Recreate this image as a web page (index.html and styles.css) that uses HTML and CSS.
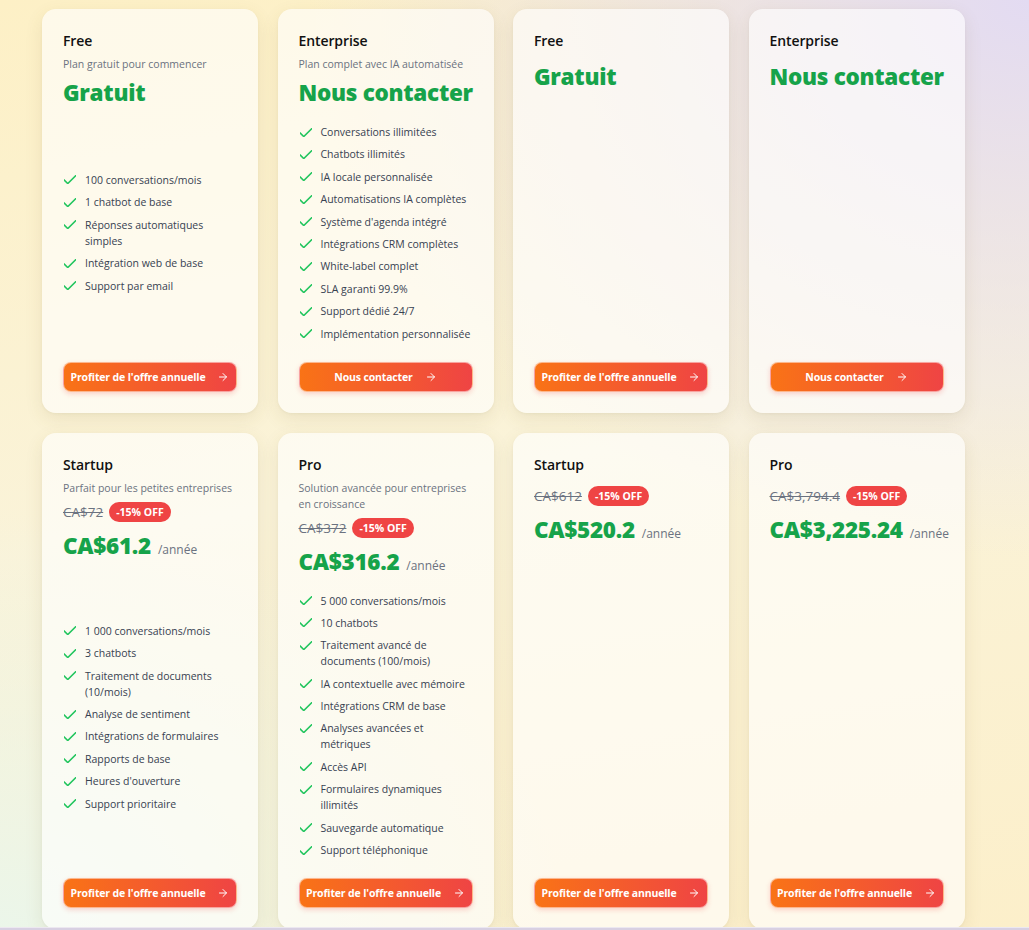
FILE: index.html
```html
<!DOCTYPE html>
<html lang="fr">
<head>
<meta charset="utf-8">
<title>Tarifs</title>
<link rel="stylesheet" href="styles.css">
</head>
<body>
<svg width="0" height="0" class="defs">
  <symbol id="check" viewBox="4 5.5 16 12"><path d="M20 6 9 17l-5-5" fill="none" stroke="currentColor" stroke-width="2" stroke-linecap="round" stroke-linejoin="round"/></symbol>
  <symbol id="arrow" viewBox="0 0 24 24"><path d="M5 12h14M12 5l7 7-7 7" fill="none" stroke="currentColor" stroke-width="2" stroke-linecap="round" stroke-linejoin="round"/></symbol>
</svg>
<main class="grid">
  <!-- Row 1 -->
  <section class="card">
    <h3 class="title">Free</h3>
    <p class="subtitle">Plan gratuit pour commencer</p>
    <div class="pricing"><div class="price-row"><span class="price">Gratuit</span></div></div>
    <div class="features">
      <ul>
        <li><svg class="ck"><use href="#check"/></svg><span>100 conversations/mois</span></li>
        <li><svg class="ck"><use href="#check"/></svg><span>1 chatbot de base</span></li>
        <li><svg class="ck"><use href="#check"/></svg><span>Réponses automatiques simples</span></li>
        <li><svg class="ck"><use href="#check"/></svg><span>Intégration web de base</span></li>
        <li><svg class="ck"><use href="#check"/></svg><span>Support par email</span></li>
      </ul>
    </div>
    <button class="btn">Profiter de l'offre annuelle <svg class="ar"><use href="#arrow"/></svg></button>
  </section>
  <section class="card">
    <h3 class="title">Enterprise</h3>
    <p class="subtitle">Plan complet avec IA automatisée</p>
    <div class="pricing"><div class="price-row"><span class="price">Nous contacter</span></div></div>
    <div class="features">
      <ul>
        <li><svg class="ck"><use href="#check"/></svg><span>Conversations illimitées</span></li>
        <li><svg class="ck"><use href="#check"/></svg><span>Chatbots illimités</span></li>
        <li><svg class="ck"><use href="#check"/></svg><span>IA locale personnalisée</span></li>
        <li><svg class="ck"><use href="#check"/></svg><span>Automatisations IA complètes</span></li>
        <li><svg class="ck"><use href="#check"/></svg><span>Système d'agenda intégré</span></li>
        <li><svg class="ck"><use href="#check"/></svg><span>Intégrations CRM complètes</span></li>
        <li><svg class="ck"><use href="#check"/></svg><span>White-label complet</span></li>
        <li><svg class="ck"><use href="#check"/></svg><span>SLA garanti 99.9%</span></li>
        <li><svg class="ck"><use href="#check"/></svg><span>Support dédié 24/7</span></li>
        <li><svg class="ck"><use href="#check"/></svg><span>Implémentation personnalisée</span></li>
      </ul>
    </div>
    <button class="btn">Nous contacter <svg class="ar"><use href="#arrow"/></svg></button>
  </section>
  <section class="card">
    <h3 class="title">Free</h3>
    <div class="pricing"><div class="price-row"><span class="price">Gratuit</span></div></div>
    <div class="features"></div>
    <button class="btn">Profiter de l'offre annuelle <svg class="ar"><use href="#arrow"/></svg></button>
  </section>
  <section class="card">
    <h3 class="title">Enterprise</h3>
    <div class="pricing"><div class="price-row"><span class="price">Nous contacter</span></div></div>
    <div class="features"></div>
    <button class="btn">Nous contacter <svg class="ar"><use href="#arrow"/></svg></button>
  </section>

  <!-- Row 2 -->
  <section class="card">
    <h3 class="title">Startup</h3>
    <p class="subtitle">Parfait pour les petites entreprises</p>
    <div class="pricing">
      <div class="old-row"><s class="old">CA$72</s><span class="badge">-15% OFF</span></div>
      <div class="price-row"><span class="price">CA$61.2</span><span class="per">/année</span></div>
    </div>
    <div class="features">
      <ul>
        <li><svg class="ck"><use href="#check"/></svg><span>1 000 conversations/mois</span></li>
        <li><svg class="ck"><use href="#check"/></svg><span>3 chatbots</span></li>
        <li><svg class="ck"><use href="#check"/></svg><span>Traitement de documents (10/mois)</span></li>
        <li><svg class="ck"><use href="#check"/></svg><span>Analyse de sentiment</span></li>
        <li><svg class="ck"><use href="#check"/></svg><span>Intégrations de formulaires</span></li>
        <li><svg class="ck"><use href="#check"/></svg><span>Rapports de base</span></li>
        <li><svg class="ck"><use href="#check"/></svg><span>Heures d'ouverture</span></li>
        <li><svg class="ck"><use href="#check"/></svg><span>Support prioritaire</span></li>
      </ul>
    </div>
    <button class="btn">Profiter de l'offre annuelle <svg class="ar"><use href="#arrow"/></svg></button>
  </section>
  <section class="card">
    <h3 class="title">Pro</h3>
    <p class="subtitle">Solution avancée pour entreprises en croissance</p>
    <div class="pricing">
      <div class="old-row"><s class="old">CA$372</s><span class="badge">-15% OFF</span></div>
      <div class="price-row"><span class="price">CA$316.2</span><span class="per">/année</span></div>
    </div>
    <div class="features">
      <ul>
        <li><svg class="ck"><use href="#check"/></svg><span>5 000 conversations/mois</span></li>
        <li><svg class="ck"><use href="#check"/></svg><span>10 chatbots</span></li>
        <li><svg class="ck"><use href="#check"/></svg><span>Traitement avancé de documents (100/mois)</span></li>
        <li><svg class="ck"><use href="#check"/></svg><span>IA contextuelle avec mémoire</span></li>
        <li><svg class="ck"><use href="#check"/></svg><span>Intégrations CRM de base</span></li>
        <li><svg class="ck"><use href="#check"/></svg><span>Analyses avancées et métriques</span></li>
        <li><svg class="ck"><use href="#check"/></svg><span>Accès API</span></li>
        <li><svg class="ck"><use href="#check"/></svg><span>Formulaires dynamiques illimités</span></li>
        <li><svg class="ck"><use href="#check"/></svg><span>Sauvegarde automatique</span></li>
        <li><svg class="ck"><use href="#check"/></svg><span>Support téléphonique</span></li>
      </ul>
    </div>
    <button class="btn">Profiter de l'offre annuelle <svg class="ar"><use href="#arrow"/></svg></button>
  </section>
  <section class="card">
    <h3 class="title">Startup</h3>
    <div class="pricing">
      <div class="old-row"><s class="old">CA$612</s><span class="badge">-15% OFF</span></div>
      <div class="price-row"><span class="price">CA$520.2</span><span class="per">/année</span></div>
    </div>
    <div class="features"></div>
    <button class="btn">Profiter de l'offre annuelle <svg class="ar"><use href="#arrow"/></svg></button>
  </section>
  <section class="card">
    <h3 class="title">Pro</h3>
    <div class="pricing">
      <div class="old-row"><s class="old">CA$3,794.4</s><span class="badge">-15% OFF</span></div>
      <div class="price-row"><span class="price">CA$3,225.24</span><span class="per">/année</span></div>
    </div>
    <div class="features"></div>
    <button class="btn">Profiter de l'offre annuelle <svg class="ar"><use href="#arrow"/></svg></button>
  </section>
</main>
<div class="bottom-line"></div>
</body>
</html>
```

FILE: styles.css
```css
* { box-sizing: border-box; }

html, body {
  margin: 0;
  padding: 0;
}

body {
  font-family: "Open Sans", "Noto Sans", "DejaVu Sans", sans-serif;
  color: #111827;
  min-height: 930px;
  background:
    radial-gradient(ellipse 70% 60% at 100% 0%, #e3dbf2 0%, rgba(227, 219, 242, 0) 100%),
    radial-gradient(ellipse 55% 45% at 0% 100%, #ebf6ea 0%, rgba(235, 246, 234, 0) 100%),
    linear-gradient(170deg, #fdf0c6 0%, #faf3d9 50%, #fcefca 100%);
  overflow: hidden;
}

.defs { position: absolute; }

.grid {
  display: grid;
  grid-template-columns: repeat(4, 216px);
  column-gap: 19.5px;
  row-gap: 20px;
  padding: 9px 0 0 42px;
}

.card {
  display: flex;
  flex-direction: column;
  padding: 21px;
  background: rgba(255, 255, 255, 0.62);
  border-radius: 14px;
  box-shadow: 0 6px 18px rgba(120, 100, 40, 0.11), 0 1px 3px rgba(0, 0, 0, 0.04);
}

.title {
  margin: 0 0 4px;
  font-size: 14px;
  line-height: 22px;
  font-weight: 600;
  color: #111;
  letter-spacing: -0.1px;
}

.subtitle {
  margin: 0;
  font-size: 10.5px;
  line-height: 16px;
  color: #6b7280;
}

.pricing {
  margin-top: 5px;
}

.old-row {
  display: flex;
  align-items: center;
  gap: 6px;
  height: 22px;
  margin-bottom: 7px;
}

.old {
  font-size: 13.5px;
  color: #6b7280;
  text-decoration: line-through;
}

.badge {
  display: inline-flex;
  align-items: center;
  height: 20px;
  padding: 0 7px;
  border-radius: 999px;
  background: #ef4444;
  color: #fff;
  font-size: 10.5px;
  font-weight: 700;
}

.price-row {
  display: flex;
  align-items: baseline;
  white-space: nowrap;
  height: 32px;
  line-height: 32px;
}

.price {
  font-size: 22.5px;
  font-weight: 800;
  color: #16a34a;
  letter-spacing: -0.3px;
}

.per {
  margin-left: 7px;
  font-size: 12px;
  color: #6b7280;
}

.features {
  flex: 1;
  display: flex;
  flex-direction: column;
  justify-content: center;
  margin: 15px 0 20px;
}

.features ul {
  list-style: none;
  margin: 0;
  padding: 0;
  display: flex;
  flex-direction: column;
  gap: 6.4px;
}

.features li {
  display: flex;
  align-items: flex-start;
  gap: 9px;
  font-size: 10.5px;
  line-height: 16px;
  color: #374151;
}

.ck {
  flex: 0 0 12px;
  width: 12px;
  height: 9px;
  margin-top: 3.5px;
  margin-left: 1px;
  overflow: visible;
  color: #22c55e;
}

.btn {
  display: flex;
  align-items: center;
  justify-content: center;
  gap: 12px;
  width: 100%;
  height: 30px;
  padding: 0;
  border: 1px solid rgba(255, 255, 255, 0.5);
  border-radius: 8px;
  background: linear-gradient(90deg, #f97316 0%, #ef4444 100%);
  color: #fff;
  font-family: inherit;
  font-size: 10.5px;
  font-weight: 700;
  letter-spacing: -0.15px;
  white-space: nowrap;
  box-shadow: 0 2px 5px rgba(239, 68, 68, 0.22);
  cursor: pointer;
}

.ar {
  flex: 0 0 12px;
  width: 12px;
  height: 12px;
  color: #fff;
}

.bottom-line {
  position: fixed;
  left: 0;
  right: 0;
  bottom: 0;
  height: 3px;
  background: #d8d0e2;
  border-top: 1px solid #ece8f0;
}
```
